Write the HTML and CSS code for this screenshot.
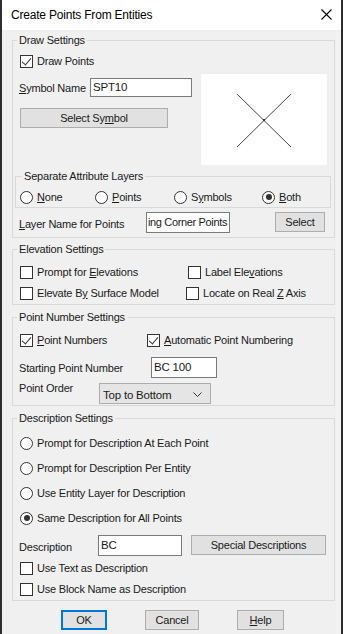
FILE: index.html
```html
<!DOCTYPE html>
<html lang="en">
<head>
    <meta charset="UTF-8">
    <meta name="viewport" content="width=device-width, initial-scale=1.0">
    <title>Create Points From Entities</title>
    <link rel="stylesheet" href="styles.css">
</head>
<body>
    <div class="window">
        <div class="titlebar">
            <span class="title">Create Points From Entities</span>
            <svg class="close" width="11" height="11" viewBox="0 0 11 11"><path d="M0.5 0.5 L10.5 10.5 M10.5 0.5 L0.5 10.5" stroke="#000" stroke-width="1.1" fill="none"/></svg>
        </div>

        <div class="content">
            <fieldset class="group group-draw">
                <legend>Draw Settings</legend>
                <div class="draw-main">
                    <div class="draw-left">
                        <label class="check row-draw"><span class="box checked"></span><span>Draw Points</span></label>
                        <div class="row-symbol">
                            <span class="lbl"><u>S</u>ymbol Name</span>
                            <span class="field field-symbol">SPT10</span>
                        </div>
                        <button type="button" class="btn btn-symbol">Select Sy<u>m</u>bol</button>
                    </div>
                    <div class="preview">
                        <svg width="126" height="91" viewBox="0 0 126 91">
                            <path d="M36 20 L90 73 M90 20 L36 73" stroke="#444" stroke-width="1" fill="none"/>
                            <rect x="62" y="45" width="2" height="2" fill="#333"/>
                        </svg>
                    </div>
                </div>

                <fieldset class="group sub-group">
                    <legend>Separate Attribute Layers</legend>
                    <div class="radio-row">
                        <label class="radio r-none"><span class="dot"></span><span><u>N</u>one</span></label>
                        <label class="radio r-points"><span class="dot"></span><span><u>P</u>oints</span></label>
                        <label class="radio r-symbols"><span class="dot"></span><span>S<u>y</u>mbols</span></label>
                        <label class="radio r-both"><span class="dot on"></span><span><u>B</u>oth</span></label>
                    </div>
                </fieldset>

                <div class="row-layer">
                    <span class="lbl"><u>L</u>ayer Name for Points</span>
                    <span class="field field-layer">ing Corner Points</span>
                    <button type="button" class="btn btn-select">Select</button>
                </div>
            </fieldset>

            <fieldset class="group group-elev">
                <legend>Elevation Settings</legend>
                <div class="elev-grid">
                    <label class="check"><span class="box"></span><span>Prompt for <u>E</u>levations</span></label>
                    <label class="check col2"><span class="box"></span><span>Label Ele<u>v</u>ations</span></label>
                    <label class="check"><span class="box"></span><span>Elevate B<u>y</u> Surface Model</span></label>
                    <label class="check col2b"><span class="box"></span><span>Locate on Real <u>Z</u> Axis</span></label>
                </div>
            </fieldset>

            <fieldset class="group group-num">
                <legend>Point Number Settings</legend>
                <div class="num-checks">
                    <label class="check"><span class="box checked"></span><span><u>P</u>oint Numbers</span></label>
                    <label class="check auto"><span class="box checked"></span><span><u>A</u>utomatic Point Numbering</span></label>
                </div>
                <div class="row-start">
                    <span class="lbl">Starting Point Number</span>
                    <span class="field field-start">BC 100</span>
                </div>
                <div class="row-order">
                    <span class="lbl">Point Order</span>
                    <div class="combo">
                        <span>Top to Bottom</span>
                        <svg width="9" height="5" viewBox="0 0 9 5"><path d="M0.5 0.5 L4.5 4.5 L8.5 0.5" stroke="#333" stroke-width="1" fill="none"/></svg>
                    </div>
                </div>
            </fieldset>

            <fieldset class="group group-desc">
                <legend>Description Settings</legend>
                <label class="radio desc-radio first"><span class="dot"></span><span>Prompt for Description At Each Point</span></label>
                <label class="radio desc-radio"><span class="dot"></span><span>Prompt for Description Per Entity</span></label>
                <label class="radio desc-radio"><span class="dot"></span><span>Use Entity Layer for Description</span></label>
                <label class="radio desc-radio"><span class="dot on"></span><span>Same Description for All Points</span></label>
                <div class="row-desc">
                    <span class="lbl">Description</span>
                    <span class="field field-desc">BC</span>
                    <button type="button" class="btn btn-special">Special Descriptions</button>
                </div>
                <label class="check desc-check first"><span class="box"></span><span>Use Text as Description</span></label>
                <label class="check desc-check"><span class="box"></span><span>Use Block Name as Description</span></label>
            </fieldset>

            <div class="actions">
                <button type="button" class="btn btn-ok">OK</button>
                <button type="button" class="btn btn-cancel">Cancel</button>
                <button type="button" class="btn btn-help"><u>H</u>elp</button>
            </div>
        </div>
    </div>
</body>
</html>
```

FILE: styles.css
```css
body {
    margin: 0;
    padding: 0;
    background-color: #f0f0f0;
    font-family: "Liberation Sans", Arial, sans-serif;
    font-size: 11px;
    letter-spacing: -0.2px;
    color: #1a1a1a;
}

.window {
    width: 343px;
    height: 634px;
    box-sizing: border-box;
    border-left: 2px solid #2e2e2e;
    border-right: 2px solid #2e2e2e;
    background-color: #f0f0f0;
    overflow: hidden;
}

.titlebar {
    height: 30px;
    background-color: #fff;
    display: flex;
    align-items: center;
    justify-content: space-between;
    padding: 0 9px 0 9px;
}

.title {
    font-size: 12px;
    color: #000;
}

.close {
    margin-top: -1px;
}

.content {
    padding-top: 3px;
}

u {
    text-decoration: underline;
    text-underline-offset: 1px;
}

/* group boxes */
.group {
    margin: 0 6px 0 10px;
    padding: 0;
    border: 1px solid #d9d9d9;
    min-width: 0;
}

.group legend {
    margin-left: 4px;
    padding: 0 2px;
    line-height: 15px;
}

.group-elev { margin-top: 4px; padding-bottom: 3px; }
.group-num { margin-top: 5px; padding-bottom: 1px; }
.group-desc { margin-top: 5px; padding-bottom: 3px; }
.group-draw { padding-bottom: 4px; }

/* checks and radios */
.check,
.radio {
    display: flex;
    align-items: center;
    height: 16px;
    white-space: nowrap;
}

.box {
    width: 11px;
    height: 11px;
    border: 1px solid #333;
    background-color: #fff;
    margin-right: 4px;
    flex: none;
    position: relative;
}

.box.checked::after {
    content: "";
    position: absolute;
    left: 3px;
    top: 0px;
    width: 4px;
    height: 8px;
    border-right: 1.3px solid #333;
    border-bottom: 1.3px solid #333;
    transform: rotate(40deg);
}

.dot {
    width: 11px;
    height: 11px;
    border: 1px solid #333;
    border-radius: 50%;
    background-color: #fff;
    margin-right: 4px;
    flex: none;
    position: relative;
}

.dot.on::after {
    content: "";
    position: absolute;
    left: 2.5px;
    top: 2.5px;
    width: 6px;
    height: 6px;
    border-radius: 50%;
    background-color: #333;
}

/* fields and buttons */
.field {
    display: block;
    box-sizing: border-box;
    height: 20px;
    line-height: 18px;
    border: 1px solid #7a7a7a;
    background-color: #fff;
    padding: 0 2px;
    white-space: nowrap;
    overflow: hidden;
    font-size: 11.5px;
}

.btn {
    box-sizing: border-box;
    height: 20px;
    padding: 0;
    border: 1px solid #adadad;
    background-color: #e1e1e1;
    font-family: inherit;
    font-size: 11px;
    letter-spacing: -0.2px;
    color: #1a1a1a;
}

.lbl {
    white-space: nowrap;
}

/* draw settings */
.draw-main {
    display: grid;
    grid-template-columns: 1fr 133px;
}

.draw-left {
    padding-left: 7px;
    display: flex;
    flex-direction: column;
    align-items: flex-start;
}

.row-draw {
    margin-top: 4px;
    height: 18px;
}

.row-symbol {
    margin-top: 8px;
    display: flex;
    align-items: center;
    width: 100%;
}

.row-symbol .lbl {
    width: 71px;
    margin-left: -1px;
}

.field-symbol {
    width: 102px;
    height: 19px;
    line-height: 17px;
}

.btn-symbol {
    margin-top: 11px;
    width: 148px;
    height: 20px;
}

.preview {
    margin-top: 26px;
    margin-right: 7px;
    height: 91px;
    background-color: #fff;
}

.preview svg {
    display: block;
}

.sub-group {
    margin: 4px 3px 0 2px;
    padding-bottom: 2px;
}

.sub-group legend {
    margin-left: 6px;
}

.radio-row {
    margin-top: 5px;
    display: flex;
    padding-left: 4px;
}

.r-none { width: 75px; }
.r-points { width: 79px; }
.r-symbols { width: 88px; }

.row-layer {
    margin-top: 4px;
    height: 21px;
    display: flex;
    align-items: center;
    padding-left: 6px;
}

.row-layer .lbl {
    width: 127px;
    margin-top: 3px;
}

.field-layer {
    width: 84px;
    height: 21px;
    line-height: 19px;
    font-size: 11px;
    letter-spacing: -0.35px;
    padding: 0 1px;
}

.btn-select {
    margin-left: 45px;
    width: 50px;
    margin-top: -1px;
}

/* elevation settings */
.elev-grid {
    display: grid;
    grid-template-columns: 168px 1fr;
    row-gap: 5px;
    padding-left: 7px;
    margin-top: 7px;
}

.col2b {
    margin-left: -2px;
}

/* point number settings */
.num-checks {
    display: flex;
    padding-left: 7px;
    margin-top: 7px;
}

.num-checks .check {
    width: 127px;
}

.row-start {
    margin-top: 9px;
    display: flex;
    align-items: center;
    padding-left: 6px;
}

.row-start .lbl {
    width: 132px;
}

.field-start {
    width: 66px;
    height: 21px;
    line-height: 19px;
}

.row-order {
    margin-top: 5px;
    display: flex;
    align-items: flex-start;
    padding-left: 6px;
    height: 21px;
}

.row-order .lbl {
    width: 80px;
    margin-top: -1px;
}

.combo {
    box-sizing: border-box;
    width: 112px;
    height: 21px;
    border: 1px solid #adadad;
    background-color: #e5e5e5;
    display: flex;
    align-items: center;
    justify-content: space-between;
    padding: 2px 8px 0 3px;
    font-size: 11.5px;
}

/* description settings */
.desc-radio {
    padding-left: 7px;
    margin-top: 9px;
}

.row-desc {
    margin-top: 9px;
    display: flex;
    align-items: center;
    padding-left: 6px;
}

.row-desc .lbl {
    width: 79px;
    margin-top: 3px;
}

.field-desc {
    width: 84px;
    height: 21px;
    line-height: 19px;
}

.btn-special {
    margin-left: 9px;
    width: 135px;
    margin-top: -1px;
}

.desc-check {
    padding-left: 7px;
    margin-top: 5px;
}

.desc-check.first {
    margin-top: 4px;
}

/* dialog buttons */
.actions {
    display: flex;
    padding-left: 59px;
    margin-top: 9px;
}

.btn-ok {
    width: 46px;
    height: 20px;
    border: 2px solid #0078d7;
}

.btn-cancel {
    margin-left: 38px;
    width: 54px;
}

.btn-help {
    margin-left: 38px;
    width: 47px;
}
```
